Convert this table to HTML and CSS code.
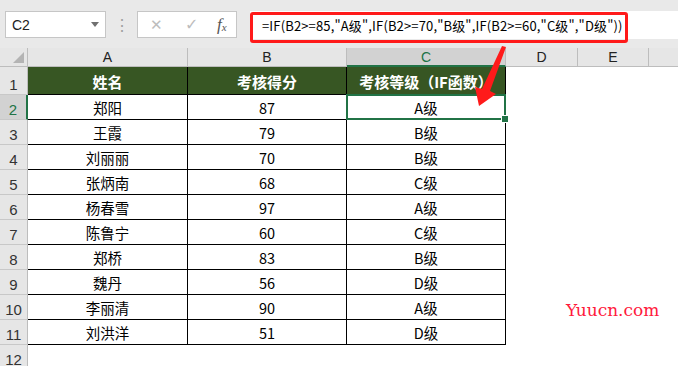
FILE: index.html
```html
<!DOCTYPE html>
<html lang="zh-CN">
<head>
<meta charset="utf-8">
<title>IF函数</title>
<link rel="stylesheet" href="styles.css">
</head>
<body>
<div class="app">
  <div class="topbar">
    <div class="namebox"><span class="name">C2</span><span class="drop"></span></div>
    <div class="dots">⋮</div>
    <div class="fxbox">
      <span class="btn cancel">✕</span>
      <span class="btn ok">✓</span>
      <span class="fx">f<sub>x</sub></span>
    </div>
    <div class="formula">=IF(B2&gt;=85,"A级",IF(B2&gt;=70,"B级",IF(B2&gt;=60,"C级","D级"))</div>
  </div>
  <div class="sheet">
    <div class="corner"><span class="tri"></span></div>
    <div class="colh">A</div>
    <div class="colh">B</div>
    <div class="colh sel">C</div>
    <div class="colh">D</div>
    <div class="colh">E</div>
    <div class="colh last"></div>

    <div class="rowh first">1</div>
    <div class="cell head">姓名</div>
    <div class="cell head">考核得分</div>
    <div class="cell head">考核等级（IF函数）</div>
    <div class="blank"></div><div class="blank"></div><div class="blank"></div>

    <div class="rowh sel">2</div>
    <div class="cell">郑阳</div><div class="cell">87</div><div class="cell active">A级</div>
    <div class="blank"></div><div class="blank"></div><div class="blank"></div>

    <div class="rowh">3</div>
    <div class="cell">王霞</div><div class="cell">79</div><div class="cell">B级</div>
    <div class="blank"></div><div class="blank"></div><div class="blank"></div>

    <div class="rowh">4</div>
    <div class="cell">刘丽丽</div><div class="cell">70</div><div class="cell">B级</div>
    <div class="blank"></div><div class="blank"></div><div class="blank"></div>

    <div class="rowh">5</div>
    <div class="cell">张炳南</div><div class="cell">68</div><div class="cell">C级</div>
    <div class="blank"></div><div class="blank"></div><div class="blank"></div>

    <div class="rowh">6</div>
    <div class="cell">杨春雪</div><div class="cell">97</div><div class="cell">A级</div>
    <div class="blank"></div><div class="blank"></div><div class="blank"></div>

    <div class="rowh">7</div>
    <div class="cell">陈鲁宁</div><div class="cell">60</div><div class="cell">C级</div>
    <div class="blank"></div><div class="blank"></div><div class="blank"></div>

    <div class="rowh">8</div>
    <div class="cell">郑桥</div><div class="cell">83</div><div class="cell">B级</div>
    <div class="blank"></div><div class="blank"></div><div class="blank"></div>

    <div class="rowh">9</div>
    <div class="cell">魏丹</div><div class="cell">56</div><div class="cell">D级</div>
    <div class="blank"></div><div class="blank"></div><div class="blank"></div>

    <div class="rowh">10</div>
    <div class="cell">李丽清</div><div class="cell">90</div><div class="cell">A级</div>
    <div class="blank"></div><div class="blank"></div><div class="blank"></div>

    <div class="rowh">11</div>
    <div class="cell">刘洪洋</div><div class="cell">51</div><div class="cell">D级</div>
    <div class="blank"></div><div class="blank"></div><div class="blank"></div>

    <div class="rowh">12</div>
    <div class="blank"></div><div class="blank"></div><div class="blank"></div>
    <div class="blank"></div><div class="blank"></div><div class="blank"></div>
  </div>

  <div class="redbox"></div>
  <svg class="arrow" width="678" height="366" viewBox="0 0 678 366">
    <polygon points="502,46 506,47 490,91 496,94 479,106 475,87 482,89" fill="#ff1a1a"/>
  </svg>
  <div class="watermark">Yuucn.com</div>
</div>
</body>
</html>
```
FILE: styles.css
```css
* { box-sizing: border-box; }
html, body { margin: 0; padding: 0; background: #fff; }
body {
  width: 678px;
  height: 366px;
  overflow: hidden;
  font-family: "Noto Sans CJK SC", "Noto Sans", sans-serif;
  color: #000;
}
.app { position: relative; width: 678px; height: 366px; overflow: hidden; }

.topbar {
  height: 48px;
  background: #e9e9e9;
  display: flex;
  align-items: flex-start;
  padding-top: 11px;
}
.namebox {
  margin-left: 5px;
  width: 101px;
  height: 27px;
  background: #fff;
  border: 1px solid #c6c6c6;
  display: flex;
  align-items: center;
  justify-content: space-between;
  padding: 0 6px 0 6px;
  font-family: "Liberation Sans", sans-serif;
  font-size: 14px;
  color: #222;
}
.drop {
  width: 0; height: 0;
  border-left: 4px solid transparent;
  border-right: 4px solid transparent;
  border-top: 5px solid #707070;
}
.dots {
  width: 31px;
  text-align: center;
  color: #a0a0a0;
  font-size: 16px;
  line-height: 27px;
}
.fxbox {
  width: 100px;
  height: 27px;
  background: #fff;
  border: 1px solid #c6c6c6;
  display: flex;
  align-items: center;
  padding-left: 12px;
}
.btn { color: #bdbdbd; font-family: "DejaVu Sans", sans-serif; font-size: 15px; }
.cancel { width: 35px; }
.ok { width: 32px; font-size: 16px; }
.fx {
  font-family: "Liberation Serif", serif;
  font-style: italic;
  font-size: 17px;
  color: #555;
}
.fx sub { font-size: 11px; vertical-align: -1px; }
.formula {
  margin-left: 13px;
  flex: 1;
  height: 28px;
  background: #fff;
  padding-left: 12px;
  font-size: 13px;
  letter-spacing: 0.15px;
  line-height: 29px;
  white-space: nowrap;
  color: #000;
}

.sheet {
  display: grid;
  grid-template-columns: 28px 160px 159px 159px 72px 71px 1fr;
  grid-template-rows: 19px 28px repeat(11, 25px);
}
.corner {
  background: #e6e6e6;
  border-right: 1px solid #bdbdbd;
  border-bottom: 1px solid #bdbdbd;
  position: relative;
}
.tri {
  position: absolute;
  right: 3px;
  bottom: 3px;
  width: 0; height: 0;
  border-left: 11px solid transparent;
  border-bottom: 11px solid #b4b4b4;
}
.colh {
  background: #e6e6e6;
  border-right: 1px solid #bdbdbd;
  border-bottom: 1px solid #bdbdbd;
  display: flex;
  align-items: center;
  justify-content: center;
  font-family: "Liberation Sans", sans-serif;
  font-size: 14px;
  color: #222;
}
.colh.sel {
  background: #d2d2d2;
  color: #217346;
  border-bottom: 2px solid #217346;
}
.colh.last { border-right: none; }
.rowh {
  background: #e6e6e6;
  border-right: 1px solid #bdbdbd;
  border-bottom: 1px solid #c8c8c8;
  display: flex;
  align-items: flex-end;
  justify-content: center;
  padding-bottom: 1px;
  font-family: "Liberation Sans", sans-serif;
  font-size: 15px;
  color: #333;
}
.rowh.sel {
  background: #d2d2d2;
  color: #217346;
  border-right: 2px solid #217346;
}
.cell {
  border-right: 1px solid #000;
  border-bottom: 1px solid #000;
  display: flex;
  align-items: center;
  justify-content: center;
  font-size: 14.5px;
  padding-top: 1px;
}
.cell.head {
  background: #375623;
  color: #fff;
  font-weight: bold;
  font-size: 15px;
}
.cell.active { position: relative; }
.cell.active::after {
  content: "";
  position: absolute;
  left: -1px; top: -1px; right: -1px; bottom: -1px;
  border: 2px solid #217346;
}
.cell.active::before {
  content: "";
  position: absolute;
  right: -4px;
  bottom: -4px;
  width: 6px; height: 6px;
  background: #217346;
  border: 1px solid #fff;
  z-index: 2;
}
.blank { background: #fff; }

.redbox {
  position: absolute;
  left: 250px;
  top: 12px;
  width: 378px;
  height: 31px;
  border: 3px solid #ff1a1a;
  border-radius: 3px;
}
.arrow { position: absolute; left: 0; top: 0; }
.watermark {
  position: absolute;
  left: 566px;
  top: 300px;
  font-family: "DejaVu Serif", serif;
  font-size: 17px;
  color: #ff1a3c;
}
```
